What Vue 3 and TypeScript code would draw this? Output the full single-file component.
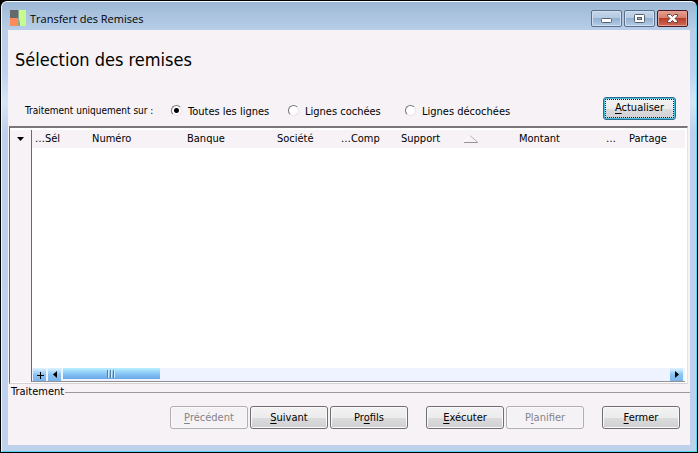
<script setup lang="ts">
import { ref } from 'vue'

interface Column {
  label: string
  cls: string
  sorted?: boolean
}

interface Action {
  before: string
  key: string
  after: string
  disabled?: boolean
}

const scope = ref('all')

const scopes = [
  { value: 'all', label: 'Toutes les lignes' },
  { value: 'checked', label: 'Lignes cochées' },
  { value: 'unchecked', label: 'Lignes décochées' },
]

const columns: Column[] = [
  { label: '…Sél', cls: 'c-sel' },
  { label: 'Numéro', cls: 'c-num' },
  { label: 'Banque', cls: 'c-bank' },
  { label: 'Société', cls: 'c-company' },
  { label: '…Comp', cls: 'c-comp' },
  { label: 'Support', cls: 'c-support', sorted: true },
  { label: 'Montant', cls: 'c-amount' },
  { label: '…', cls: 'c-more' },
  { label: 'Partage', cls: 'c-share' },
]

const groups: Action[][] = [
  [
    { before: '', key: 'P', after: 'récédent', disabled: true },
    { before: '', key: 'S', after: 'uivant' },
    { before: 'Pr', key: 'o', after: 'fils' },
  ],
  [
    { before: '', key: 'E', after: 'xécuter' },
    { before: 'P', key: 'l', after: 'anifier', disabled: true },
  ],
  [{ before: '', key: 'F', after: 'ermer' }],
]
</script>

<template>
  <div class="window">
    <header class="titlebar">
      <svg class="logo" width="16" height="16" viewBox="0 0 16 16" aria-hidden="true">
        <rect width="8" height="8" fill="#66696a" />
        <rect y="8" width="8" height="8" fill="#fb8b5c" />
        <rect x="9" width="7" height="16" fill="#c5fb91" />
        <path d="M8 0h1v10l1 2v4H8z" fill="#89a794" />
      </svg>
      <span class="title">Transfert des Remises</span>
      <div class="caption">
        <button type="button" class="cap" aria-label="Réduire">
          <svg width="29" height="15" viewBox="0 0 29 15">
            <rect x="9.500" y="7.500" width="10" height="4" rx="1" fill="#fff" stroke="#555e6b" />
          </svg>
        </button>
        <button type="button" class="cap" aria-label="Agrandir">
          <svg width="29" height="15" viewBox="0 0 29 15">
            <rect x="9.500" y="3.500" width="10" height="8" rx="1" fill="#fff" stroke="#555e6b" />
            <rect x="12.500" y="6.500" width="4" height="2" fill="#9db7d3" stroke="#555e6b" />
          </svg>
        </button>
        <button type="button" class="cap close" aria-label="Fermer la fenêtre">
          <svg width="29" height="15" viewBox="0 0 29 15">
            <path
              d="M9.500 3.500h3l2 2 2-2h3v1.500L17 7.500l2.500 2.500v1.500h-3l-2-2-2 2h-3V10L12 7.500 9.500 5z"
              fill="#fff"
              stroke="#664549"
            />
          </svg>
        </button>
      </div>
    </header>

    <main class="client">
      <h1>Sélection des remises</h1>

      <div class="filters" role="radiogroup" aria-labelledby="scope-label">
        <span id="scope-label" class="scope-label">Traitement uniquement sur :</span>
        <label v-for="s in scopes" :key="s.value" class="radio" :for="'scope-' + s.value">
          <input :id="'scope-' + s.value" v-model="scope" type="radio" name="scope" :value="s.value" />
          <span>{{ s.label }}</span>
        </label>
        <button type="button" class="btn default"><u>A</u>ctualiser</button>
      </div>

      <section class="grid">
        <div class="gutter">
          <button type="button" class="drop" aria-label="Options">
            <svg width="7" height="4" viewBox="0 0 7 4"><path d="M0 0h7L3.500 4z" /></svg>
          </button>
        </div>
        <div class="sheet">
          <table>
            <thead>
              <tr>
                <th v-for="c in columns" :key="c.cls" :class="c.cls" scope="col">
                  <span class="head">
                    {{ c.label }}
                    <svg v-if="c.sorted" class="sort" width="15" height="8" viewBox="0 0 15 8" aria-hidden="true">
                      <path d="M0 7.500h14" stroke="#96949a" />
                      <path d="M6 .5l8 7" stroke="#b5b2b6" fill="none" />
                      <path d="M6 .5L0 7" stroke="#fff" fill="none" />
                    </svg>
                  </span>
                </th>
              </tr>
            </thead>
            <tbody></tbody>
          </table>
          <div class="scroll">
            <button type="button" class="sb" aria-label="Ajouter">
              <svg width="8" height="8" viewBox="0 0 8 8"><path d="M1 4.500h7M4.500 1v7" stroke="#000" /></svg>
            </button>
            <button type="button" class="sb" aria-label="Défiler à gauche">
              <svg width="4" height="7" viewBox="0 0 4 7"><path d="M4 0v7L0 3.500z" /></svg>
            </button>
            <div class="track">
              <div class="thumb"><i></i><i></i><i></i></div>
            </div>
            <button type="button" class="sb" aria-label="Défiler à droite">
              <svg width="4" height="7" viewBox="0 0 4 7"><path d="M0 0v7l4-3.500z" /></svg>
            </button>
          </div>
        </div>
      </section>

      <div class="legend"><span>Traitement</span></div>

      <footer class="actions">
        <div v-for="(g, i) in groups" :key="i" class="group">
          <button v-for="a in g" :key="a.key" type="button" class="btn" :disabled="a.disabled">
            {{ a.before }}<u>{{ a.key }}</u>{{ a.after }}
          </button>
        </div>
      </footer>
    </main>
  </div>
</template>

<style>
body {
  background: #000;
}
</style>

<style scoped>
* {
  box-sizing: border-box;
}

.window {
  min-height: calc(100vh - 2px);
  margin: 1px;
  padding: 0 6px 6px;
  display: flex;
  flex-direction: column;
  border: 1px solid #55d5ee;
  border-top-color: #f4fafd;
  border-left-color: #eff6fc;
  border-radius: 6px 6px 0 0;
  background: linear-gradient(#9db8d5 0, #b8cee8 28px, #bdd3ee 70px, #d6e6f7 100px, #bdd1ec 130px, #bfd2ec 100%);
  font-family: "DejaVu Sans Condensed", "DejaVu Sans", sans-serif;
  font-stretch: condensed;
  font-size: 11px;
  line-height: 14px;
  color: #000;
}

button {
  font: inherit;
  color: inherit;
  padding: 0;
}

svg {
  display: block;
  flex: none;
}

.titlebar {
  height: 28px;
  padding: 0 2px;
  display: flex;
  align-items: center;
  gap: 4px;
}

.title {
  flex: 1;
  font-family: "Open Sans", "Noto Sans", sans-serif;
  font-stretch: normal;
  padding-top: 6px;
}

.logo {
  margin-top: 4px;
}

.caption {
  display: flex;
  gap: 2px;
  padding-top: 4px;
}

.cap {
  width: 31px;
  height: 17px;
  border: 1px solid #5b6f8c;
  border-radius: 2px;
  background: linear-gradient(#c3d6ea 0, #b3c9e1 50%, #93b0d0 50%, #b2cce6 100%);
  box-shadow: inset 0 0 0 1px #cfdff0;
}

.close {
  border-color: #491b28;
  background: linear-gradient(#e5a193 0, #d57967 50%, #b83e2a 50%, #d06952 100%);
  box-shadow: inset 0 0 0 1px #e59e91;
}

.client {
  flex: 1;
  display: flex;
  flex-direction: column;
  min-width: 0;
  background: #f6f2f6;
}

h1 {
  margin: 0;
  padding: 18px 7px 0;
  font-size: 18px;
  font-weight: 400;
  line-height: 24px;
}

.filters {
  display: grid;
  grid-template-columns: 146px 117px 117px 1fr auto;
  align-items: center;
  height: 54px;
  padding: 18px 14px 0 17px;
}

.scope-label {
  padding-top: 6px;
  font-size: 10px;
  white-space: nowrap;
}

.radio {
  display: flex;
  align-items: center;
  gap: 6px;
  padding-top: 4px;
  white-space: nowrap;
}

.radio span {
  padding-top: 4px;
}

.radio input {
  appearance: none;
  width: 11px;
  height: 11px;
  margin: 0;
  border: 1px solid;
  border-color: #77747a #e8e4e8 #e8e4e8 #77747a;
  border-radius: 50%;
  background: #fff;
}

.radio input:checked {
  background: radial-gradient(circle, #000 2px, #fff 3px);
}

.btn {
  width: 78px;
  height: 23px;
  border: 1px solid #706d72;
  border-radius: 3px;
  background: linear-gradient(#f3f2f3 0, #ececec 50%, #dcdcdd 50%, #d0cfd2 100%);
  box-shadow: inset 0 0 0 1px #fbfafb;
  white-space: nowrap;
}

.btn:disabled {
  border-color: #b0adb1;
  background: #f5f2f5;
  color: #858286;
}

.btn.default {
  width: 73px;
  border-color: #2d6e8e;
  box-shadow: inset 0 0 0 1px #43bde0;
  outline: 1px dotted #222;
  outline-offset: -3px;
}

u {
  text-underline-offset: 2px;
}

.grid {
  flex: 1;
  display: flex;
  margin: 0 2px 0 1px;
  padding: 2px 2px 1px 0;
  border: 1px solid #d5d2d6;
  border-top: 2px solid #79757b;
  border-left-color: #69666c;
  border-right-color: #e5e2e6;
  background: #fff;
}

.gutter {
  width: 21px;
  flex: none;
  background: #f6f2f6;
}

.drop {
  display: flex;
  align-items: center;
  justify-content: center;
  width: 21px;
  height: 18px;
  border: 0;
  background: transparent;
}

.sheet {
  flex: 1;
  min-width: 0;
  display: flex;
  flex-direction: column;
  justify-content: space-between;
  border-left: 1px solid #6b686d;
  border-bottom: 1px solid #929095;
}

table {
  width: 100%;
  table-layout: fixed;
  border-collapse: collapse;
}

th {
  height: 18px;
  padding: 0 0 0 3px;
  background: #f6f2f6;
  font-weight: 400;
  text-align: left;
  white-space: nowrap;
}

.head {
  display: flex;
  align-items: center;
}

.sort {
  margin-left: 24px;
}

.c-sel { width: 57px; }
.c-num { width: 95px; }
.c-bank { width: 90px; }
.c-company { width: 64px; }
.c-comp { width: 60px; }
.c-support { width: 118px; }
.c-amount { width: 87px; }
.c-more { width: 23px; }
.c-share { width: 59px; }

.scroll {
  display: flex;
  gap: 2px;
  height: 13px;
  padding: 0 2px 0 1px;
  background: #eef3ff;
}

.sb {
  width: 13px;
  flex: none;
  display: flex;
  align-items: center;
  justify-content: center;
  border: 0;
  background: linear-gradient(#e0f4ff, #8bc4f4 50%, #7bb6ec);
}

.track {
  flex: 1;
}

.thumb {
  width: 16%;
  height: 11px;
  display: flex;
  align-items: center;
  justify-content: center;
  gap: 1px;
  background: linear-gradient(#b9f1ff, #85c2f5 55%, #6ba8e6);
}

.thumb i {
  width: 2px;
  height: 8px;
  border-left: 1px solid #4d7da5;
  border-right: 1px solid #d3ecfb;
}

.legend {
  display: flex;
  align-items: center;
  gap: 1px;
  height: 14px;
  margin-top: 1px;
  padding-left: 3px;
}

.legend::after {
  content: "";
  flex: 1;
  height: 1px;
  background: #9c999e;
}

.actions {
  display: flex;
  justify-content: flex-end;
  gap: 18px;
  padding: 7px 10px 16px;
}

.group {
  display: flex;
  gap: 2px;
}
</style>
